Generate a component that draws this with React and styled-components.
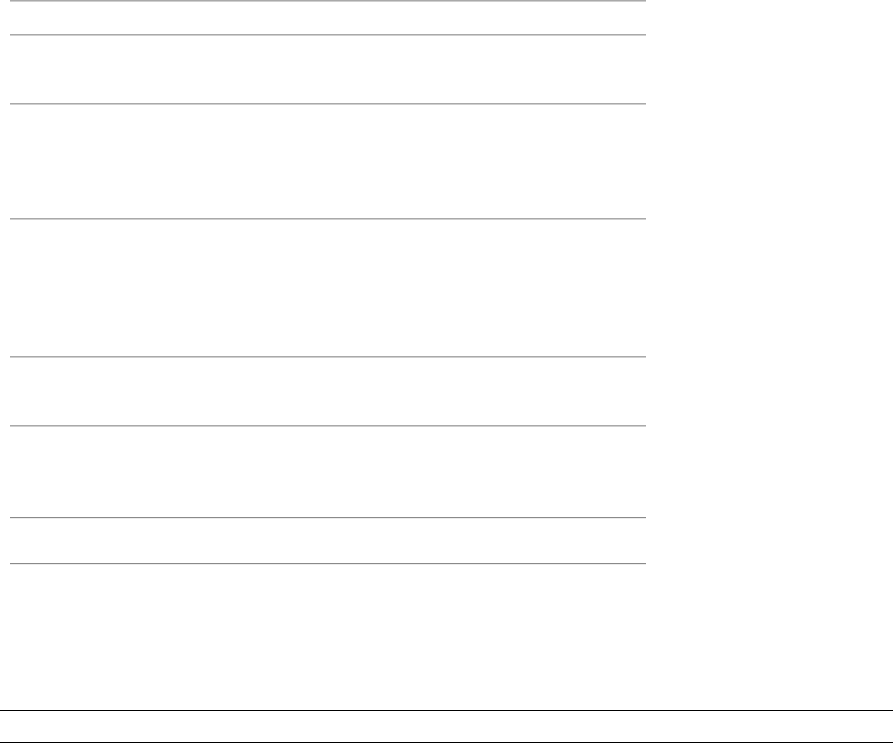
import React from 'react';
import styled, {createGlobalStyle} from 'styled-components';

const GlobalStyle = createGlobalStyle`
    html, body {margin: 0; padding: 0; background: #ffffff;}
    body {font-family: "Liberation Sans", Arial, sans-serif; color: #000;}
`;

// gaps between the rules, top to bottom
const sections = [
    {gap: 32, tone: 'light'},
    {gap: 67, tone: 'light'},
    {gap: 113, tone: 'light'},
    {gap: 136, tone: 'light'},
    {gap: 67, tone: 'light'},
    {gap: 90, tone: 'light'},
    {gap: 44, tone: 'dark'},
    {gap: 0, tone: 'dark'},
];

const App = () => {
    return (
        <Page>
            <GlobalStyle/>
            <Column>
                {sections.map((s, i) => (
                    <React.Fragment key={i}>
                        <Rule tone={s.tone}/>
                        <Blank height={s.gap}/>
                    </React.Fragment>
                ))}
            </Column>
            <Spacer/>
            <Footer/>
        </Page>
    )
}

export default App;

const Page = styled.div`
    display: flex;
    flex-direction: column;
    width: 893px;
    height: 743px;
    overflow: hidden;
`;

const Column = styled.div`
    display: flex;
    flex-direction: column;
    width: 636px;
    padding-left: 10px;
`;

const Rule = styled.div`
    height: 0;
    border-top: 1px solid ${p => p.tone === 'dark' ? '#8a8a8a' : '#a9a9a9'};
    border-bottom: 1px solid ${p => p.tone === 'dark' ? '#ececec' : '#cfcfcf'};
`;

const Blank = styled.div`
    height: ${p => p.height}px;
`;

const Spacer = styled.div`
    height: 145px;
`;

const Footer = styled.div`
    height: 31px;
    border-top: 1px solid #000;
    border-bottom: 1px solid #000;
`;
